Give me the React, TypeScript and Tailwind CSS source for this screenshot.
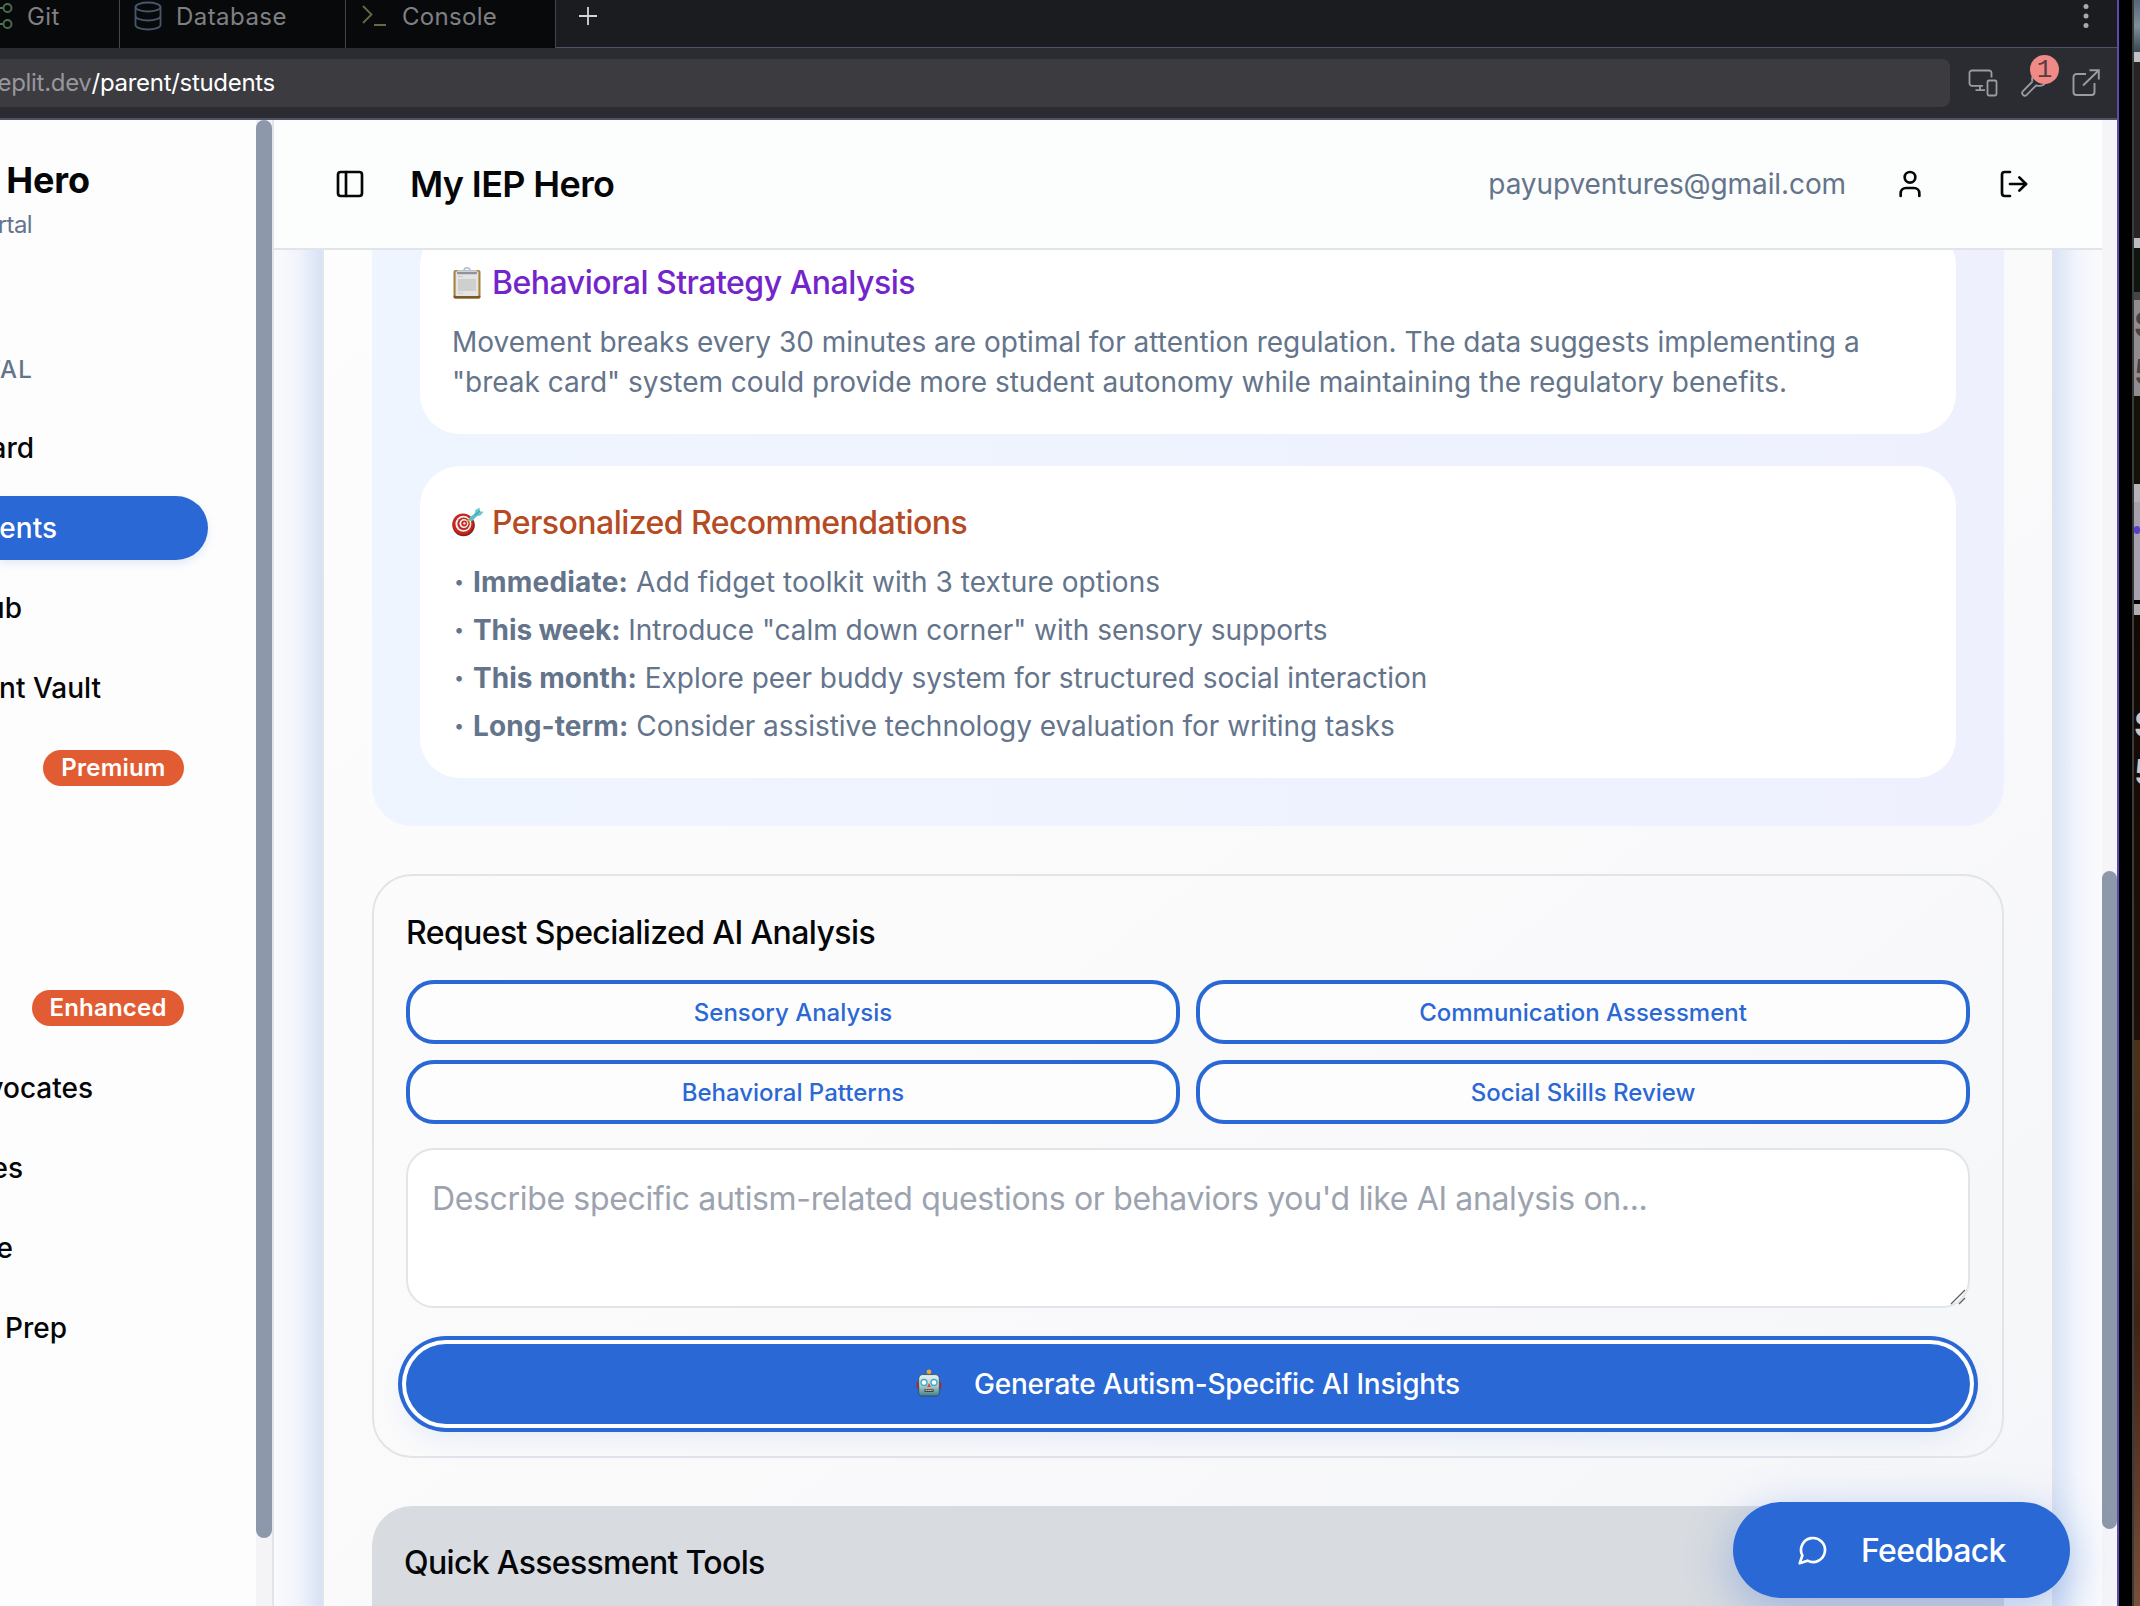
import React from 'react';
import { LogOut, PanelLeft, User } from 'lucide-react';

type NavItem = { label: string; right: string; active?: boolean; badge?: string };

const navItems: NavItem[] = [
  { label: 'ard', right: 'w-[34px]' },
  { label: 'ents', right: 'w-[57px]', active: true },
  { label: 'ub', right: 'w-[22px]' },
  { label: 'nt Vault', right: 'w-[101px]' },
  { label: '', right: 'w-[43px]', badge: 'Premium' },
  { label: '', right: 'w-[23px]' },
  { label: '', right: 'w-[23px]' },
  { label: '', right: 'w-[32px]', badge: 'Enhanced' },
  { label: 'vocates', right: 'w-[93px]' },
  { label: 'es', right: 'w-[23px]' },
  { label: 'e', right: 'w-[13px]' },
  { label: 'Prep', right: 'w-[67px]' },
];

const recommendations = [
  { when: 'Immediate:', what: 'Add fidget toolkit with 3 texture options', whenClass: 'tracking-[0.2px]', whatClass: 'tracking-[0.06px]' },
  { when: 'This week:', what: 'Introduce "calm down corner" with sensory supports', whenClass: 'tracking-[-0.1px]', whatClass: 'tracking-[-0.03px]' },
  { when: 'This month:', what: 'Explore peer buddy system for structured social interaction', whenClass: 'tracking-[0.05px]', whatClass: 'tracking-[-0.02px]' },
  { when: 'Long-term:', what: 'Consider assistive technology evaluation for writing tasks', whenClass: 'tracking-[0.1px]', whatClass: 'tracking-[-0.045px]' },
];

const analyses = ['Sensory Analysis', 'Communication Assessment', 'Behavioral Patterns', 'Social Skills Review'];

function ClipboardIcon() {
  return (
    <svg className="h-8 w-[30px] shrink-0" viewBox="0 0 30 32">
      <rect x="1.5" y="3" width="27" height="28.5" rx="2" fill="#a8813f" />
      <rect x="1.5" y="28.5" width="27" height="3" rx="1.4" fill="#7d5726" />
      <rect x="3.6" y="4.5" width="22.8" height="24.5" fill="#e4e4e3" />
      <rect x="6" y="12" width="18" height="12" fill="#cfcfce" />
      <path d="M6 9.5h5M6 26h5" stroke="#cccccb" strokeWidth="1" />
      <rect x="5" y="3.2" width="20" height="4" rx="1" fill="#8f949c" />
      <rect x="5" y="3.2" width="20" height="1.8" rx=".9" fill="#cdd3dc" />
      <path d="M12 3.5c0-1.8 1.3-2.7 3-2.7s3 .9 3 2.7" fill="none" stroke="#b4bfd0" strokeWidth="1.5" />
    </svg>
  );
}

function TargetIcon() {
  return (
    <svg className="h-8 w-8 shrink-0" viewBox="0 0 32 32">
      <ellipse cx="11.6" cy="18.2" rx="11.2" ry="11" fill="#8e1c17" />
      <circle cx="11" cy="17" r="10.6" fill="#c4271f" />
      <circle cx="11.4" cy="16.8" r="8" fill="#f4efee" />
      <circle cx="11.6" cy="16.7" r="6.3" fill="#bf2a22" />
      <circle cx="11.9" cy="16.6" r="4.5" fill="#f4efee" />
      <circle cx="12.2" cy="16.5" r="2.9" fill="#bf2a22" />
      <circle cx="12.4" cy="16.4" r="1.2" fill="#f4efee" />
      <path d="M15 14.5l3-2.8" stroke="#d9a520" strokeWidth="2" />
      <path d="M16.5 11.5l7-5.7 2.4 2.4-6.4 6.2z" fill="#5cc0cc" />
      <path d="M22.5 6.8L23.5 3l4-2.5.3 3.8 3.8.5-3.2 3.8-4 .7z" fill="#69c8cf" />
      <path d="M23 8.4l5-4.8" stroke="#2f8d9c" strokeWidth="1" />
    </svg>
  );
}

function RobotIcon() {
  return (
    <svg className="-mt-[2px] h-7 w-[26px] shrink-0" viewBox="0 0 26 28">
      <defs>
        <linearGradient id="face" x1="0" y1="0" x2="0" y2="1">
          <stop offset="0" stopColor="#e6f4f3" />
          <stop offset=".5" stopColor="#b3d0d1" />
          <stop offset="1" stopColor="#3f7f86" />
        </linearGradient>
      </defs>
      <rect x="12" y="3" width="2.2" height="4" fill="#5d3350" />
      <circle cx="13" cy="2.8" r="2.4" fill="#f0a52d" />
      <rect x=".6" y="13" width="3" height="7" rx="1.3" fill="#a52c35" />
      <rect x="22.4" y="13" width="3" height="7" rx="1.3" fill="#a52c35" />
      <path d="M6.5 5.6h13c2.2 0 3.800 1.700 3.800 4v13.400c0 2.400-1.200 4-3.300 4H6c-2.100 0-3.300-1.600-3.300-4V9.600c0-2.300 1.600-4 3.800-4z" fill="url(#face)" stroke="#2b4a50" strokeWidth=".8" />
      <circle cx="8" cy="13.500" r="3" fill="#fff" stroke="#3fa9cc" strokeWidth="1.300" />
      <circle cx="18" cy="13.500" r="3" fill="#fff" stroke="#3fa9cc" strokeWidth="1.300" />
      <path d="M13 14l2 4h-4z" fill="#d8493e" />
      <path d="M8.500 21.500h9" stroke="#3d2e35" strokeWidth="2.600" />
      <path d="M9.500 21.400h7" stroke="#efe3dd" strokeWidth="1.400" strokeDasharray="1.300 .7" />
    </svg>
  );
}

function TabBar() {
  return (
    <div className="flex h-12 border-b border-[#515268] bg-[#1b1c20] text-[24px] leading-[33px] tracking-[0.45px] text-[#7f8084]">
      <div className="-mb-px flex h-12 w-[120px] items-start border-r border-[#43444f] bg-[#08090b]">
        <svg className="h-8 w-[14px] shrink-0" viewBox="0 0 14 32" fill="none" stroke="#4b714e" strokeWidth="1.800">
          <circle cx="7.500" cy="8" r="4" />
          <circle cx="7.500" cy="24" r="4" />
          <path d="M0 8h3.500M0 24h3.500" />
        </svg>
        <span className="ml-[13px]">Git</span>
      </div>
      <div className="-mb-px flex h-12 w-[226px] items-start border-r border-[#43444f] bg-[#08090b] pl-[14px]">
        <svg className="h-8 w-7 shrink-0" viewBox="0 0 28 32" fill="none" stroke="#46566c" strokeWidth="1.800">
          <ellipse cx="14" cy="7" rx="12.500" ry="4.500" />
          <path d="M1.500 7v18c0 2.500 5.600 4.500 12.500 4.500s12.500-2 12.500-4.500V7M1.500 16c0 2.500 5.600 4.500 12.500 4.500s12.500-2 12.500-4.500" />
        </svg>
        <span className="ml-[14px]">Database</span>
      </div>
      <div className="-mb-px flex h-12 w-[210px] items-start border-r border-[#43444f] bg-[#08090b] pl-4">
        <svg className="h-8 w-6 shrink-0" viewBox="0 0 24 32" fill="none" stroke="#6b6743" strokeWidth="1.800">
          <path d="M1 6l8.500 8.500L1 23M12 25h12" />
        </svg>
        <span className="ml-4 tracking-[0.3px]">Console</span>
      </div>
      <svg className="ml-[22px] h-8 w-5" viewBox="0 0 20 32" stroke="#d5d6d9" strokeWidth="1.800">
        <path d="M1 16h18M10 7v18" />
      </svg>
      <svg className="mr-[27px] ml-auto h-8 w-2" viewBox="0 0 8 32" fill="#a9aaae">
        <circle cx="4" cy="6.500" r="2.500" />
        <circle cx="4" cy="16" r="2.500" />
        <circle cx="4" cy="25.500" r="2.500" />
      </svg>
    </div>
  );
}

function UrlBar() {
  return (
    <div className="flex h-[72px] items-center border-b-2 border-[#515268] bg-[#2b2c31]">
      <div className="flex h-12 w-[1950px] items-center rounded-r-lg bg-[#3b3b40] text-[24px] tracking-[-0.3px]">
        <div className="flex w-[275px] justify-end whitespace-nowrap text-white">
          <span className="text-[#96979b]">eplit.dev</span>
          <span>/parent/students</span>
        </div>
      </div>
      <svg className="ml-[18px] h-7 w-[30px]" viewBox="0 0 30 28" fill="none" stroke="#9b9ca1" strokeWidth="1.800">
        <path d="M15 16.800H4a2.500 2.500 0 0 1-2.500-2.500V4A2.500 2.500 0 0 1 4 1.500h17A2.500 2.500 0 0 1 23.500 4v4.500M12 17v4M7.500 21.200H17" />
        <rect x="19.500" y="11.500" width="9" height="15" rx="1.500" />
      </svg>
      <div className="relative ml-[22px] h-7 w-8">
        <svg className="h-7 w-8" viewBox="0 0 32 28" fill="none" stroke="#9b9ca1" strokeWidth="1.800">
          <path d="M12.500 12.500c-1.500-4 1-9 6-10.500M12.500 12.500L3 22.200a2.600 2.600 0 0 0 3.700 3.700L16.300 16.300c3.500 1.200 7 .3 9.200-2.300" />
        </svg>
        <div className="absolute -top-[14px] left-[10px] flex size-[29px] items-center justify-center rounded-full bg-[#f08a87] font-['Liberation_Mono'] text-[26px] leading-none text-[#5b3a40]">1</div>
      </div>
      <svg className="ml-[20px] h-7 w-7" viewBox="0 0 28 28" fill="none" stroke="#9b9ca1" strokeWidth="1.900">
        <path d="M14 5H4.500A3 3 0 0 0 1.500 8v15a3 3 0 0 0 3 3h15a3 3 0 0 0 3-3v-9M11 16.500L26.500 1.500M17.500 1.200h9.300v9.300" />
      </svg>
    </div>
  );
}

function Sidebar() {
  return (
    <div className="flex h-full w-[274px] shrink-0 border-r-2 border-[#e2e4e9] bg-[#fdfdfd]">
      <div className="w-[256px] overflow-hidden text-[28px] font-medium whitespace-nowrap text-[#020817]">
        <div className="mt-[38px] flex h-11 w-[90px] items-center justify-end text-[36px] font-bold tracking-[-0.1px] text-[#050608]">Hero</div>
        <div className="mt-[5px] flex h-9 w-8 items-center justify-end text-[24px] font-normal tracking-[-0.6px] text-[#64748b]">rtal</div>
        <div className="mt-[103px] flex h-12 w-[33px] items-center justify-end text-[24px] tracking-[1.2px] text-[#64748b]">TAL</div>
        <div className="mt-[22px] flex flex-col gap-4">
          {navItems.map((item, i) => (
            <div
              key={i}
              className={
                item.active
                  ? 'flex h-16 w-[208px] items-center rounded-r-full bg-[#2a68d5] text-white shadow-[0_4px_8px_rgba(42,104,213,0.12)]'
                  : 'flex h-16 w-[208px] items-center text-[#050608]'
              }
            >
              <span className={`flex shrink-0 justify-end ${item.right}`}>{item.label}</span>
              {item.badge && (
                <span className="mr-6 flex h-9 flex-1 items-center justify-center rounded-full bg-[#e25c33] text-[24px] font-semibold tracking-[0.2px] text-white">
                  {item.badge}
                </span>
              )}
            </div>
          ))}
        </div>
      </div>
      <div className="w-4 bg-[#f4f4f7]">
        <div className="h-[1418px] rounded-full bg-[#8d99aa]" />
      </div>
    </div>
  );
}

function Header() {
  return (
    <header className="flex h-[130px] shrink-0 items-center border-b-2 border-[#e2e4e9] bg-[#fcfdfd] pl-[60px] text-[#050608]">
      <PanelLeft size={32} strokeWidth={2} />
      <h1 className="ml-[44px] text-[36px] font-semibold tracking-[-0.64px]">My IEP Hero</h1>
      <span className="ml-auto text-[28px] tracking-[-0.1px] text-[#64748b]">payupventures@gmail.com</span>
      <User className="ml-[48px]" size={32} strokeWidth={2} />
      <LogOut className="mr-[72px] ml-[72px]" size={32} strokeWidth={2} />
    </header>
  );
}

function Insights() {
  return (
    <section className="rounded-b-[40px] bg-linear-to-r from-[#eff5fe] to-[#eef0fe] px-12 pb-12 text-[28px] leading-10 text-[#64748b]">
      <div className="-mt-6 rounded-[40px] bg-white p-8">
        <h3 className="mb-4 flex h-12 items-center pt-[2px] text-[32px] font-medium tracking-[-0.5px] text-[#7325cb]">
          <ClipboardIcon />
          <span className="ml-[10px]">Behavioral Strategy Analysis</span>
        </h3>
        <p className="whitespace-nowrap">
          Movement breaks every 30 minutes are optimal for attention regulation. The data suggests implementing a
          <br />
          "break card" system could provide more student autonomy while maintaining the regulatory benefits.
        </p>
      </div>
      <div className="mt-8 rounded-[40px] bg-white p-8">
        <h3 className="mb-4 flex h-12 items-center pt-[2px] text-[32px] font-medium tracking-[-0.55px] text-[#b54a23]">
          <TargetIcon />
          <span className="ml-2">Personalized Recommendations</span>
        </h3>
        <ul className="flex flex-col gap-2">
          {recommendations.map((r) => (
            <li key={r.when} className="flex whitespace-nowrap">
              <span className="w-[21px] pl-[2px] text-[18px]">•</span>
              <span className={r.whatClass}>
                <strong className={`font-bold ${r.whenClass}`}>{r.when}</strong> {r.what}
              </span>
            </li>
          ))}
        </ul>
      </div>
    </section>
  );
}

function RequestPanel() {
  return (
    <section className="mt-12 rounded-[40px] border-2 border-[#e1e4e9] p-8">
      <h3 className="mb-6 h-12 pt-px text-[32px] leading-[48px] font-medium tracking-[-0.59px] text-[#050608]">Request Specialized AI Analysis</h3>
      <div className="grid grid-cols-2 gap-4">
        {analyses.map((a) => (
          <button key={a} className="h-16 rounded-[28px] border-4 border-[#2a68d5] bg-[#fdfdfe] pt-[2px] text-[24px] font-medium text-[#2a68d5]">
            {a}
          </button>
        ))}
      </div>
      <div className="relative mt-6 h-40 rounded-[28px] border-2 border-[#e1e4e9] bg-white px-6 pt-[25px] text-[32px] leading-[48px] tracking-[-0.345px] whitespace-nowrap text-[#9ca3af]">
        Describe specific autism-related questions or behaviors you'd like AI analysis on...
        <svg className="absolute right-0 bottom-0 size-[18px]" viewBox="0 0 18 18" stroke="#5f6062" strokeWidth="1.3">
          <path d="M1 16L15 2M9 16l6-6" />
        </svg>
      </div>
      <button className="mt-9 flex h-20 w-full items-center justify-center rounded-full bg-[#2a68d5] text-[28px] font-medium tracking-[-0.2px] text-white shadow-[0_0_0_4px_#fff,0_0_0_8px_#2a68d5,0_12px_28px_rgba(42,104,213,0.12)]">
        <RobotIcon />
        <span className="ml-8">Generate Autism-Specific AI Insights</span>
      </button>
    </section>
  );
}

function DesktopEdge() {
  return (
    <div className="flex h-full flex-col overflow-hidden text-[36px] leading-[48px] font-bold">
      <div className="h-[52px] shrink-0 bg-linear-to-b from-[#53677c] via-[#7f9099] to-[#364954]" />
      <div className="h-[10px] shrink-0 bg-[#c2c0c3]" />
      <div className="h-[176px] shrink-0 bg-[#252526]" />
      <div className="h-[10px] shrink-0 bg-[#bdbcbe]" />
      <div className="h-[44px] shrink-0 bg-[#0d170f]" />
      <div className="h-[8px] shrink-0 bg-[#464646]" />
      <div className="h-[96px] shrink-0 bg-[#8f8d90] text-[#444345]">
        <div>S</div>
        <div>5</div>
      </div>
      <div className="h-[88px] shrink-0 bg-[#121209]" />
      <div className="h-[18px] shrink-0 bg-[#b5b3b7]" />
      <div className="flex h-[98px] shrink-0 items-start bg-[#a5a2ad] pt-6">
        <div className="h-2 w-full rounded-full bg-[#5b3fc4]" />
      </div>
      <div className="h-[4px] shrink-0 bg-black" />
      <div className="h-[11px] shrink-0 bg-[#b0aeb0]" />
      <div className="h-[425px] shrink-0 bg-linear-to-b from-[#120904] to-[#1f1107] pt-[85px] text-[#c9c7c8]">
        <div>S</div>
        <div>5</div>
      </div>
      <div className="flex-1 bg-linear-to-b from-[#4a3419] via-[#3f2414] to-[#78503a]" />
    </div>
  );
}

export default function App() {
  return (
    <div className="relative flex h-[1606px] w-[2140px] overflow-hidden bg-black font-['Inter',sans-serif]">
      <div className="flex w-[2119px] shrink-0 flex-col border-r-2 border-[#5b4bb0]">
        <TabBar />
        <UrlBar />
        <div className="flex h-[1486px]">
          <Sidebar />
          <div className="flex w-[1828px] shrink-0 flex-col">
            <Header />
            <main className="flex flex-1 overflow-hidden">
              <div className="w-12 shrink-0 bg-linear-to-r from-[#fbfbfe] via-[#f2f4fb] to-[#d7e2f5]" />
              <div className="flex flex-1 flex-col border-x-2 border-[#e1e4e9] bg-linear-to-br from-[#fdfdfd] via-[#fafafb] to-[#f5f6f9] px-12">
                <Insights />
                <RequestPanel />
                <section className="mt-12 flex-1 rounded-t-[40px] bg-[#d8dbe0] px-8 pt-[33px] text-[32px] leading-[48px] font-medium tracking-[-0.67px] text-[#050608]">
                  Quick Assessment Tools
                </section>
              </div>
              <div className="w-12 shrink-0 bg-linear-to-r from-[#d9e4f5] via-[#f2f5fc] to-[#fbfbfd]" />
            </main>
          </div>
          <div className="flex-1 bg-[#f5f5f8] pt-[751px]">
            <div className="h-[658px] rounded-full bg-[#8d99aa]" />
          </div>
        </div>
      </div>
      <div className="w-[13px] shrink-0 bg-black" />
      <div className="w-[2px] shrink-0 bg-[#3b3b3b]" />
      <div className="w-[6px] shrink-0">
        <DesktopEdge />
      </div>
      <button className="absolute top-[1502px] left-[1733px] flex h-24 w-[337px] items-center rounded-full bg-[#2a68d5] pl-16 text-[32px] font-medium tracking-[-0.6px] text-white shadow-[0_12px_48px_rgba(42,104,213,0.35)]">
        <svg className="size-8" viewBox="0 0 24 24" fill="none" stroke="currentColor" strokeWidth="2" strokeLinecap="round" strokeLinejoin="round">
          <path d="M7.9 20A9 9 0 1 0 4 16.1L2 22Z" />
        </svg>
        <span className="mt-[2px] ml-8">Feedback</span>
      </button>
    </div>
  );
}
